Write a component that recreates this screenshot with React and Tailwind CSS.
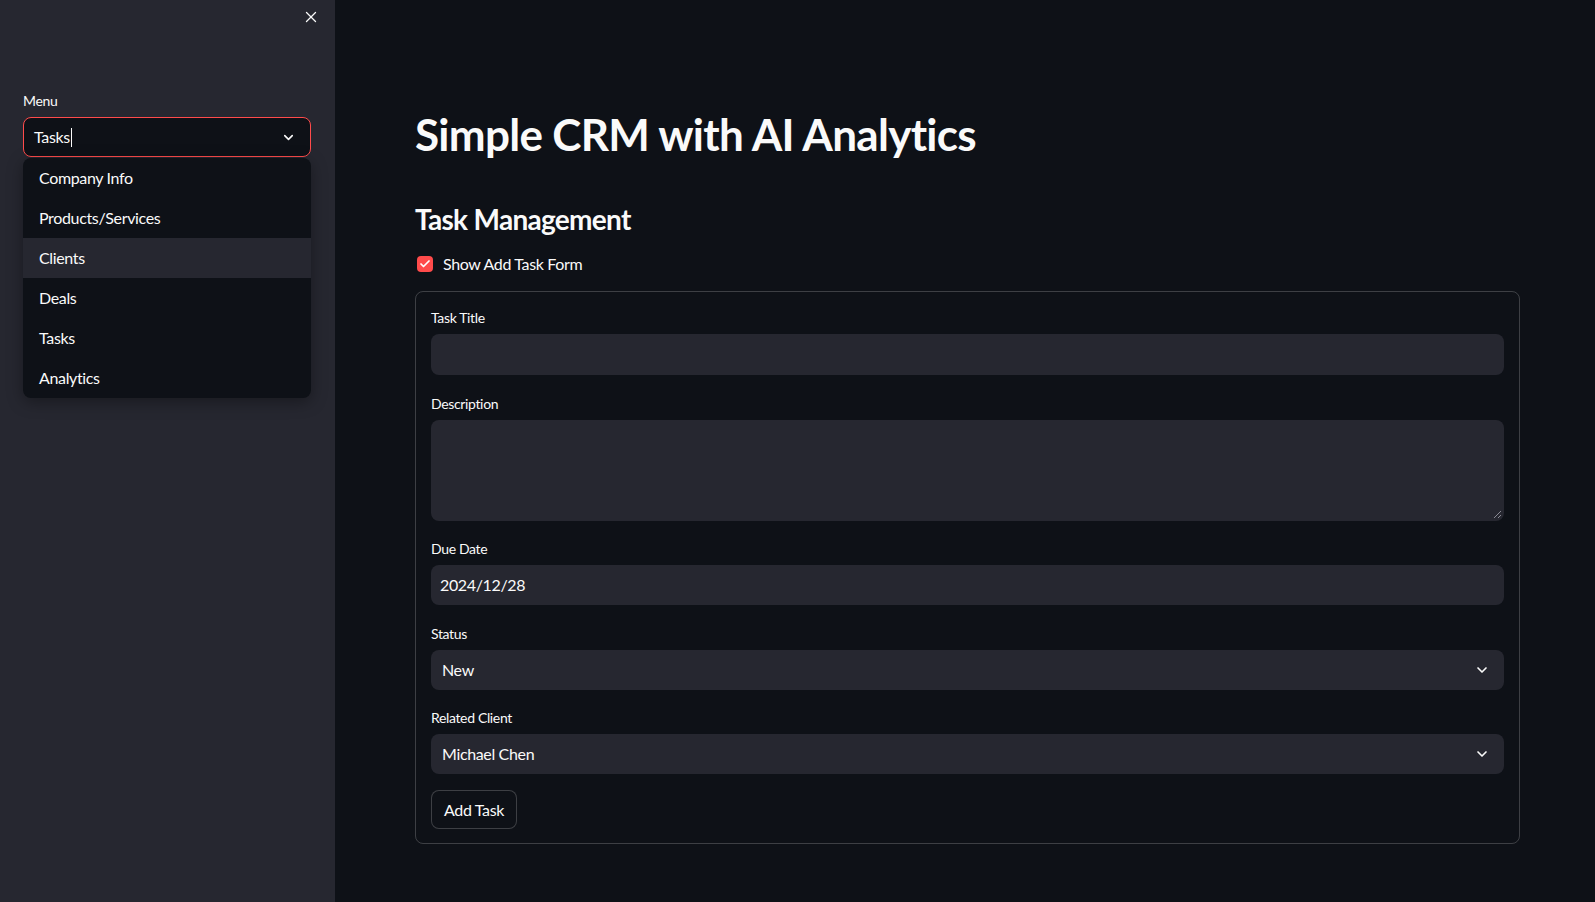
import React from 'react';
import { X, ChevronDown, Check } from 'lucide-react';

const font = { fontFamily: 'Lato, "Noto Sans", sans-serif' };

const menuItems = ['Company Info', 'Products/Services', 'Clients', 'Deals', 'Tasks', 'Analytics'];

const Label = ({ children }) => (
  <div className="h-[21px] mb-[6px] text-[14px] leading-[21px] text-[#fafafa]">{children}</div>
);

const SelectBox = ({ value }) => (
  <div className="h-[40px] rounded-lg bg-[#262730] flex items-center justify-between pl-[11px] pr-[14px] text-[16px] text-[#fafafa]">
    <span>{value}</span>
    <ChevronDown size={16} strokeWidth={2.5} className="text-[#fafafa]" />
  </div>
);

const Sidebar = () => (
  <div className="w-[335px] shrink-0 bg-[#262730] relative">
    <button type="button" className="absolute top-[8px] left-[302px] text-[#fafafa]">
      <X size={18} strokeWidth={1.75} />
    </button>
    <div className="pt-[90px] px-[23px] w-[311px] box-content pr-0">
      <div className="h-[21px] mb-[6px] text-[14px] leading-[21px] text-[#fafafa]">Menu</div>
      <div className="w-[288px] h-[40px] rounded-lg border border-[#ff4b4b] bg-[#0e1117] flex items-center justify-between pl-[10px] pr-[14px]">
        <span className="text-[16px] text-[#fafafa] flex items-center">
          Tasks<span className="inline-block w-px h-[19px] bg-[#fafafa] ml-[1px]" />
        </span>
        <ChevronDown size={15} strokeWidth={2.5} className="text-[#fafafa]" />
      </div>
      <div className="w-[288px] mt-[1px] rounded-lg bg-[#0e1117] shadow-[0_4px_16px_rgba(0,0,0,0.35)] overflow-hidden">
        {menuItems.map((item) => (
          <div
            key={item}
            className={`h-[40px] flex items-center pl-[16px] text-[16px] text-[#fafafa] ${item === 'Clients' ? 'bg-[#262730]' : ''}`}
          >
            {item}
          </div>
        ))}
      </div>
    </div>
  </div>
);

export default function App() {
  return (
    <div className="flex w-full min-h-[902px] h-[902px] bg-[#0e1117] text-[#fafafa] overflow-hidden tracking-[-0.35px]" style={font}>
      <Sidebar />
      <main className="flex-1 pl-[80px] pr-[75px] pt-[108px]">
        <h1 className="text-[44px] font-bold leading-[53px] tracking-[-0.7px]">Simple CRM with AI Analytics</h1>
        <h3 className="mt-[41px] text-[28px] font-bold leading-[34px] tracking-[-0.7px]">Task Management</h3>
        <div className="mt-[16px] h-[24px] flex items-center pl-[2px]">
          <span className="w-[16px] h-[16px] rounded-[4px] bg-[#ff4b4b] flex items-center justify-center">
            <Check size={12} strokeWidth={3.5} className="text-white" />
          </span>
          <span className="ml-[10px] text-[16px]">Show Add Task Form</span>
        </div>
        <div className="mt-[15px] border border-[rgba(250,250,250,0.2)] rounded-lg px-[15px] pt-[15px] pb-[14px]">
          <Label>Task Title</Label>
          <div className="h-[41px] rounded-lg bg-[#262730]" />

          <div className="mt-[17.5px]">
            <Label>Description</Label>
            <div className="h-[101px] rounded-lg bg-[#262730] relative">
              <svg className="absolute right-[2px] bottom-[2px]" width="9" height="9" viewBox="0 0 9 9">
                <line x1="8" y1="1" x2="1" y2="8" stroke="#8a8a94" strokeWidth="1" />
                <line x1="8" y1="5" x2="5" y2="8" stroke="#8a8a94" strokeWidth="1" />
              </svg>
            </div>
          </div>

          <div className="mt-[17.5px]">
            <Label>Due Date</Label>
            <div className="h-[40px] rounded-lg bg-[#262730] flex items-center pl-[9px] text-[16px]">2024/12/28</div>
          </div>

          <div className="mt-[17.5px]">
            <Label>Status</Label>
            <SelectBox value="New" />
          </div>

          <div className="mt-[17.5px]">
            <Label>Related Client</Label>
            <SelectBox value="Michael Chen" />
          </div>

          <button
            type="button"
            className="mt-[16px] h-[39px] px-[12px] rounded-lg border border-[rgba(250,250,250,0.2)] bg-[#0e1117] text-[16px] text-[#fafafa]"
          >
            Add Task
          </button>
        </div>
      </main>
    </div>
  );
}
